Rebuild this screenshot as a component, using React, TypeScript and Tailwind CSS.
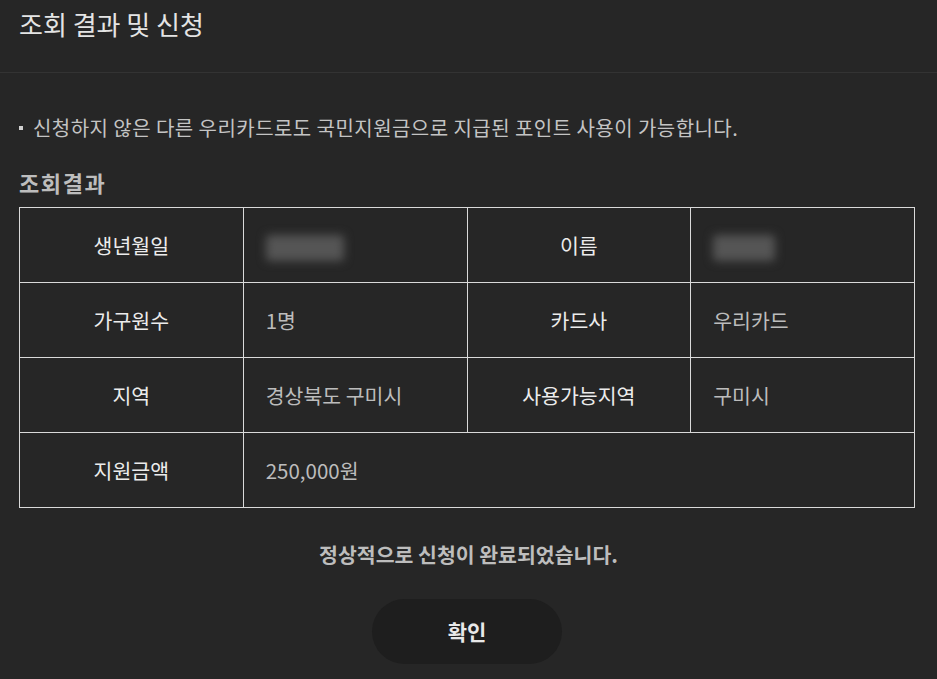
import React from 'react';

const font = { fontFamily: '"Noto Sans CJK KR", "Noto Sans", sans-serif' };

function Blur({ w }: { w: number }) {
  return (
    <span
      className="inline-block h-[26px] rounded-sm bg-[#555555] blur-[5px] align-middle"
      style={{ width: w }}
    />
  );
}

export default function App() {
  const th = 'border border-[#d9d9d9] text-center text-[20.5px] font-normal text-[#ececec] w-[224px]';
  const td = 'border border-[#d9d9d9] pl-[22px] text-[20.5px] text-[#bcbcbc] w-[224px]';

  return (
    <div className="h-[679px] w-full overflow-hidden bg-[#262626]" style={font}>
      <div className="h-[73px] border-b border-[#333333] px-[19px] pt-[5px]">
        <h1 className="text-[26px] leading-[38px] text-[#e4e4e4]">조회 결과 및 신청</h1>
      </div>

      <div className="px-[19px]">
        <p className="mt-[39px] flex items-center text-[20px] leading-[32px] tracking-[0.45px] text-[#c4c4c4]">
          <span className="mr-[10px] inline-block h-[4px] w-[4px] bg-[#d0d0d0]" />
          신청하지 않은 다른 우리카드로도 국민지원금으로 지급된 포인트 사용이 가능합니다.
        </p>

        <h2 className="mt-[23px] text-[22px] font-bold leading-[30px] tracking-[1.6px] text-[#bdbdbd]">조회결과</h2>

        <table className="mt-[10px] w-[896px] border-collapse">
          <tbody>
            <tr className="h-[75px]">
              <th className={th}>생년월일</th>
              <td className={td}>
                <Blur w={78} />
              </td>
              <th className={th}>이름</th>
              <td className={td}>
                <Blur w={62} />
              </td>
            </tr>
            <tr className="h-[75px]">
              <th className={th}>가구원수</th>
              <td className={td}>1명</td>
              <th className={th}>카드사</th>
              <td className={td}>우리카드</td>
            </tr>
            <tr className="h-[75px]">
              <th className={th}>지역</th>
              <td className={td}>경상북도 구미시</td>
              <th className={th}>사용가능지역</th>
              <td className={td}>구미시</td>
            </tr>
            <tr className="h-[75px]">
              <th className={th}>지원금액</th>
              <td className={td} colSpan={3}>
                250,000원
              </td>
            </tr>
          </tbody>
        </table>

        <p className="mt-[31px] text-center text-[20.5px] font-bold leading-[30px] text-[#bdbdbd]">
          정상적으로 신청이 완료되었습니다.
        </p>

        <div className="mt-[30px] flex justify-center pr-[3px]">
          <button className="h-[65px] w-[190px] rounded-full bg-[#1e1e1e] text-[21px] font-bold text-[#e8e8e8]">
            확인
          </button>
        </div>
      </div>
    </div>
  );
}
